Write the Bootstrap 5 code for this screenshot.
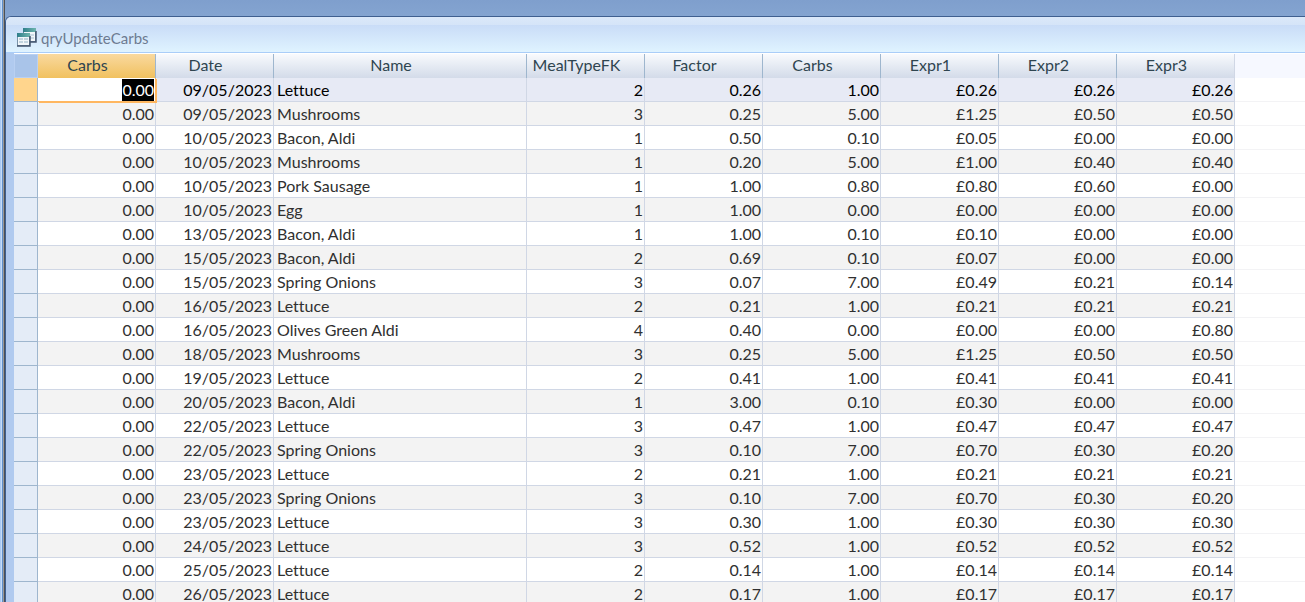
<!DOCTYPE html>
<html lang="en">
<head>
<meta charset="utf-8">
<meta name="viewport" content="width=device-width, initial-scale=1">
<title>qryUpdateCarbs</title>
<link href="https://cdn.jsdelivr.net/npm/bootstrap@5.3.0/dist/css/bootstrap.min.css" rel="stylesheet">
<style>
  body { font-family: Lato, "Open Sans", sans-serif; font-size: 16px; line-height: 23px; color: #303030; font-variant-ligatures: none;
         background: linear-gradient(#7f9fcd, #84a4d0 16px, #84a4d0); }
  .app-edge { flex: 0 0 5px; background: linear-gradient(90deg, #a9c9f3 0 1px, #c5dcf8 1px 2px, #5f8fcb 2px 3px, #9a9a9a 3px 4px, #4a5058 4px 5px); }
  .query-window { margin-top: 16px; border-top: 1px solid #3f5f8f; border-left: 1px solid #3f5f8f; border-top-left-radius: 6px; background: #b0caef; }
  .title-bar { height: 36px; padding: 8px 10px 0; font-size: 15px; color: #6d7b91; line-height: 27px; border-bottom: 1px solid #a9cdf8;
               background: linear-gradient(#dbe8f9 0, #d5e4f8 8px, #c9dcf7 8px, #dff3ff 100%); }
  .title-bar svg { margin-top: 3px; }
  .sheet-area { margin-left: 8px; padding-top: 1px; background: #fff; }
  .sheet { table-layout: fixed; border-collapse: separate; border-spacing: 0; width: 100%; min-width: 1291px; }
  .sheet th, .sheet td { height: 24px; padding: 0 1px 0 3px; border-right: 1px solid #d0d7e5; border-bottom: 1px solid #d0d7e5; text-align: right; font-weight: 400; white-space: nowrap; }
  .sheet thead th { padding: 0 19px 3px 1px; line-height: 21px; text-align: center; color: #2f4550; border-bottom: 0; border-right-color: #9eb6ce; background: linear-gradient(#f8fafd, #d3dbe9); }
  .sheet tbody tr:nth-child(even) td { background: #f3f3f3; }
  .sheet tbody tr.current td { background: #e7eaf5; color: #000; }
  .sheet tbody td.txt { text-align: left; }
  .sheet tbody th { background: #e4ecf7; border-color: #9eb6ce; }
  .sheet tbody tr.current th { background: #ffd58d; }
  .sheet thead th.corner { padding: 0; background: #a9c4e9; border: 1px solid #b9d0f2; }
  .sheet thead th.picked { background: linear-gradient(#f9d99f, #f1c15f); }
  .sheet thead th.last { border-right-color: #d0d7e5; }
  .sheet thead th.spare { background: #f6f8ff; border: 0; }
  .sheet tbody tr td.spare { background: #fff; border-right: 0; border-bottom-color: #f3f3f5; }
  .sheet tbody tr.current td.edit { position: relative; background: #fff; border-color: #ffb760; box-shadow: 1px 1px #ffb760; }
  .selected-value { display: block; width: max-content; height: 22px; margin-left: auto; line-height: 22px; background: #000; color: #fff; }
  .w-sel { width: 24px; } .w-num { width: 118px; } .w-name { width: 253px; }
</style>
<script src="https://cdn.jsdelivr.net/npm/bootstrap@5.3.0/dist/js/bootstrap.bundle.min.js"></script>
</head>
<body class="d-flex vh-100 overflow-hidden">
<div class="app-edge"></div>
<main class="query-window flex-grow-1 overflow-hidden">
  <header class="title-bar d-flex gap-1">
    <svg width="21" height="20" viewBox="0 0 21 20" aria-hidden="true">
      <defs><linearGradient id="bar" x2="1"><stop stop-color="#2f7f8a"/><stop offset="1" stop-color="#6fb5ae"/></linearGradient></defs>
      <rect x="7.500" y=".5" width="12" height="13" fill="#f2f7fa" stroke="#6886a0"/>
      <rect x="7" y="0" width="13" height="4" fill="url(#bar)"/>
      <path d="M9 6h4v2H9zM14 6h4v2h-4zM9 9h4v2H9zM14 9h4v2h-4z" fill="#cddce6"/>
      <path d="M20 3v11H13" fill="none" stroke="#44566e" stroke-width="1.500"/>
      <rect x="1.500" y="5.500" width="12" height="12" fill="#f2f7fa" stroke="#7a93a8"/>
      <rect x="1" y="5" width="13" height="4" fill="url(#bar)"/>
      <path d="M3 10h4v2H3zM8 10h4v2H8zM3 13h4v2H3zM8 13h4v2H8z" fill="#c3d5e0"/>
      <path d="M14 8v10H1" fill="none" stroke="#44566e" stroke-width="1.500"/>
    </svg>
    <span>qryUpdateCarbs</span>
  </header>
  <div class="sheet-area">
    <table class="sheet">
      <colgroup><col class="w-sel"><col class="w-num"><col class="w-num"><col class="w-name"><col class="w-num"><col class="w-num"><col class="w-num"><col class="w-num"><col class="w-num"><col class="w-num"><col></colgroup>
      <thead><tr><th class="corner"></th><th class="picked">Carbs</th><th>Date</th><th>Name</th><th>MealTypeFK</th><th>Factor</th><th>Carbs</th><th>Expr1</th><th>Expr2</th><th class="last">Expr3</th><th class="spare"></th></tr></thead>
      <tbody id="records"></tbody>
    </table>
  </div>
</main>
<script>
  const records = `09/05/2023|Lettuce|2|0.26|1.00|0.26|0.26|0.26
09/05/2023|Mushrooms|3|0.25|5.00|1.25|0.50|0.50
10/05/2023|Bacon, Aldi|1|0.50|0.10|0.05|0.00|0.00
10/05/2023|Mushrooms|1|0.20|5.00|1.00|0.40|0.40
10/05/2023|Pork Sausage|1|1.00|0.80|0.80|0.60|0.00
10/05/2023|Egg|1|1.00|0.00|0.00|0.00|0.00
13/05/2023|Bacon, Aldi|1|1.00|0.10|0.10|0.00|0.00
15/05/2023|Bacon, Aldi|2|0.69|0.10|0.07|0.00|0.00
15/05/2023|Spring Onions|3|0.07|7.00|0.49|0.21|0.14
16/05/2023|Lettuce|2|0.21|1.00|0.21|0.21|0.21
16/05/2023|Olives Green Aldi|4|0.40|0.00|0.00|0.00|0.80
18/05/2023|Mushrooms|3|0.25|5.00|1.25|0.50|0.50
19/05/2023|Lettuce|2|0.41|1.00|0.41|0.41|0.41
20/05/2023|Bacon, Aldi|1|3.00|0.10|0.30|0.00|0.00
22/05/2023|Lettuce|3|0.47|1.00|0.47|0.47|0.47
22/05/2023|Spring Onions|3|0.10|7.00|0.70|0.30|0.20
23/05/2023|Lettuce|2|0.21|1.00|0.21|0.21|0.21
23/05/2023|Spring Onions|3|0.10|7.00|0.70|0.30|0.20
23/05/2023|Lettuce|3|0.30|1.00|0.30|0.30|0.30
24/05/2023|Lettuce|3|0.52|1.00|0.52|0.52|0.52
25/05/2023|Lettuce|2|0.14|1.00|0.14|0.14|0.14
26/05/2023|Lettuce|2|0.17|1.00|0.17|0.17|0.17`.split('\n').map(line => line.split('|'));
  document.getElementById('records').innerHTML = records.map((r, i) => {
    const [date, name, meal, factor, carbs, ...money] = r;
    const first = i === 0;
    return `<tr${first ? ' class="current"' : ''}><th scope="row"></th>` +
      (first ? '<td class="edit"><span class="selected-value">0.00</span></td>' : '<td>0.00</td>') +
      `<td>${date}</td><td class="txt">${name}</td><td>${meal}</td><td>${factor}</td><td>${carbs}</td>` +
      money.map(m => `<td>£${m}</td>`).join('') + '<td class="spare"></td></tr>';
  }).join('');
</script>
</body>
</html>
